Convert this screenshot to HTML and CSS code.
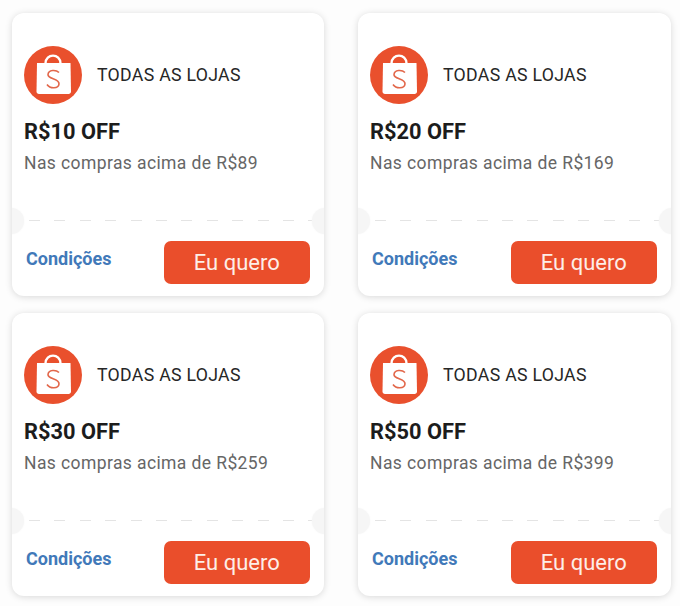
FILE: index.html
```html
<!DOCTYPE html>
<html lang="pt-BR">
<head>
    <meta charset="UTF-8">
    <meta name="viewport" content="width=device-width, initial-scale=1.0">
    <title>Cupons</title>
    <link rel="stylesheet" href="styles.css">
</head>
<body>
    <svg class="defs" width="0" height="0" aria-hidden="true">
        <symbol id="bag" viewBox="0 0 58 58">
            <circle cx="29" cy="29" r="29" fill="#e9502d"/>
            <path d="M21.5 17.5C21.5 7 36.5 7 36.5 17.5" fill="none" stroke="#fff" stroke-width="2.4"/>
            <path d="M13 17H46.5L47 45.5C47 47 46 48 44.5 48H15C13.5 48 12.5 47 12.5 45.5Z" fill="#fff"/>
            <path d="M35 26.5C32 23.5 24.5 23.5 24 28.5C23.6 33.5 35.5 32 35 38C34.5 43 26 43 23 38.5" fill="none" stroke="#e2674a" stroke-width="1.6"/>
        </symbol>
    </svg>
    <main class="grid">
        <section class="coupon">
            <div class="top">
                <div class="store">
                    <svg class="logo"><use href="#bag"/></svg>
                    <span>TODAS AS LOJAS</span>
                </div>
                <h2>R$10 OFF</h2>
                <p>Nas compras acima de R$89</p>
            </div>
            <div class="bottom">
                <a href="#">Condições</a>
                <button>Eu quero</button>
            </div>
        </section>
        <section class="coupon">
            <div class="top">
                <div class="store">
                    <svg class="logo"><use href="#bag"/></svg>
                    <span>TODAS AS LOJAS</span>
                </div>
                <h2>R$20 OFF</h2>
                <p>Nas compras acima de R$169</p>
            </div>
            <div class="bottom">
                <a href="#">Condições</a>
                <button>Eu quero</button>
            </div>
        </section>
        <section class="coupon">
            <div class="top">
                <div class="store">
                    <svg class="logo"><use href="#bag"/></svg>
                    <span>TODAS AS LOJAS</span>
                </div>
                <h2>R$30 OFF</h2>
                <p>Nas compras acima de R$259</p>
            </div>
            <div class="bottom">
                <a href="#">Condições</a>
                <button>Eu quero</button>
            </div>
        </section>
        <section class="coupon">
            <div class="top">
                <div class="store">
                    <svg class="logo"><use href="#bag"/></svg>
                    <span>TODAS AS LOJAS</span>
                </div>
                <h2>R$50 OFF</h2>
                <p>Nas compras acima de R$399</p>
            </div>
            <div class="bottom">
                <a href="#">Condições</a>
                <button>Eu quero</button>
            </div>
        </section>
    </main>
</body>
</html>
```

FILE: styles.css
```css
html, body { margin: 0; padding: 0; background: #fdfdfd; }
body { font-family: Roboto, "Liberation Sans", sans-serif; overflow: hidden; }
.defs { display: block; height: 0; }
.grid { display: grid; grid-template-columns: 312px 313px; grid-auto-rows: 283px; gap: 17px 34px; padding: 13px 9px 10px 12px; }
.coupon { position: relative; background: #fff; border-radius: 12px; box-shadow: 0 1px 7px rgba(0, 0, 0, 0.15); overflow: hidden; }
.top { height: 208px; box-sizing: border-box; padding: 33px 12px 0; background: repeating-linear-gradient(90deg, #e4e4e4 0 11px, transparent 11px 25.4px) 17px 100% / 284px 1px no-repeat; }
.store { display: flex; align-items: center; gap: 15px; font-size: 17.7px; letter-spacing: 0.3px; color: #262626; }
.logo { width: 58px; height: 58px; flex: none; }
h2 { margin: 15px 0 0; font-size: 21.8px; line-height: 26px; font-weight: 700; color: #1c1c1c; }
p { margin: 6px 0 0; font-size: 17.5px; line-height: 24px; letter-spacing: 0.4px; color: #666; }
.bottom { display: flex; justify-content: space-between; align-items: center; padding: 19.5px 14px 0; }
.bottom a { margin-top: -7px; font-size: 18px; font-weight: 700; color: #4179b9; text-decoration: none; }
button { width: 146.5px; height: 43.5px; padding: 0; border: none; border-radius: 7px; background: #ea4e2b; color: #fdeee8; font-family: inherit; font-size: 22px; }
/* side notches of the ticket */
.coupon::before, .coupon::after { content: ""; position: absolute; top: 195px; width: 26px; height: 26px; border-radius: 50%; background: #f6f6f6; box-shadow: 0 0 2px #f6f6f6; }
.coupon::before { left: -14px; }
.coupon::after { right: -14px; }
```
